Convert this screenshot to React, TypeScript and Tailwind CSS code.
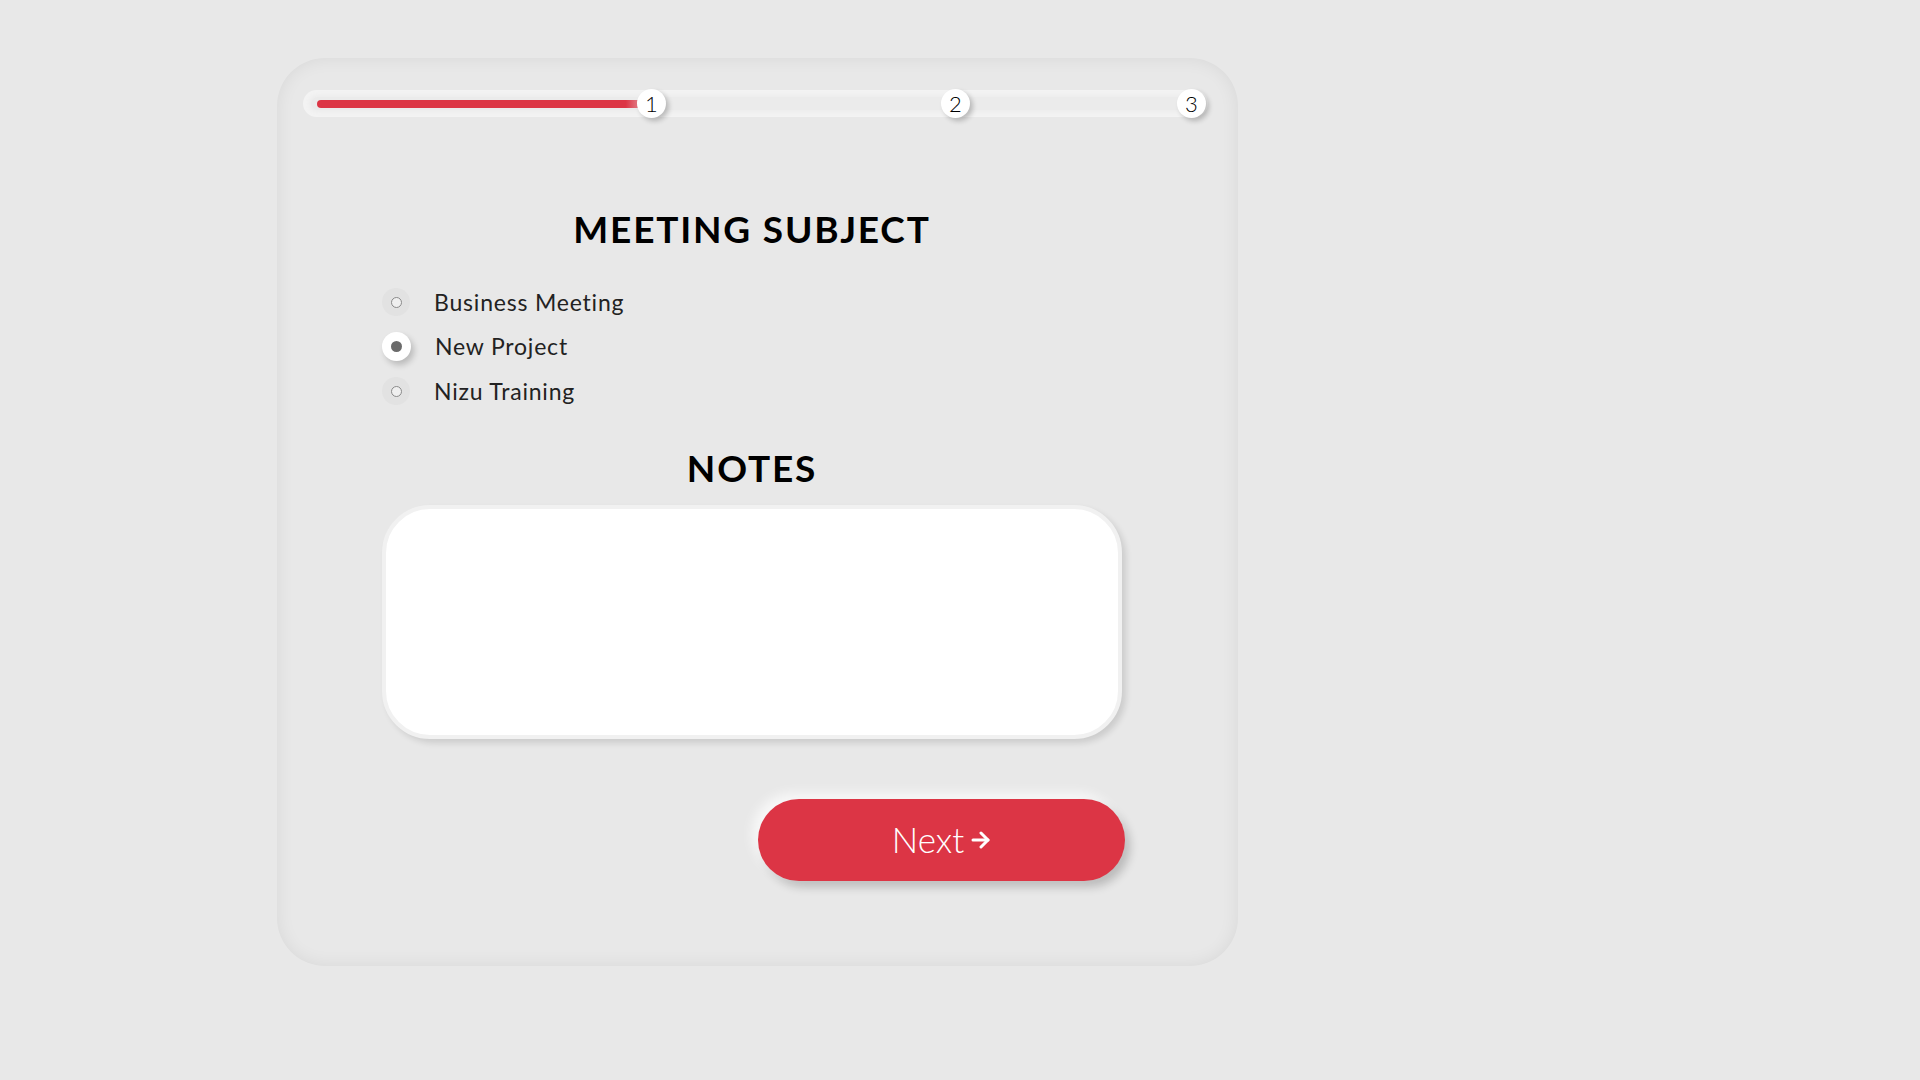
// Meeting wizard - step 1
import { useState } from 'react'

const SUBJECTS = ['Business Meeting', 'New Project', 'Nizu Training']

// step knobs, left offset inside the track (px)
const STEPS = [
  { n: 1, left: 'left-[334px]' },
  { n: 2, left: 'left-[638px]' },
  { n: 3, left: 'left-[874px]' },
]

function ProgressTrack() {
  return (
    <div className="relative h-[27px] w-[905px] rounded-full bg-[#f3f3f3]">
      {/* groove */}
      <div className="absolute left-[8px] right-[8px] top-[7px] h-[13px] rounded-full bg-[#ebebeb] shadow-[0_0_4px_2px_#ececec]" />
      {/* filled part */}
      <div className="absolute left-[14px] top-[10px] h-[8px] w-[332px] rounded-full bg-[linear-gradient(to_right,#dc3545_93%,rgba(220,53,69,0.3))]" />
      {STEPS.map((s) => (
        <div
          key={s.n}
          className={`absolute top-[-1px] ${s.left} flex h-[29px] w-[29px] items-center justify-center rounded-full bg-white text-[22px] font-light leading-none text-black shadow-[3px_3px_5px_rgba(0,0,0,0.22)]`}
        >
          {s.n}
        </div>
      ))}
    </div>
  )
}

function Radio({ label, checked, onClick }: { label: string; checked: boolean; onClick: () => void }) {
  return (
    <button onClick={onClick} className="flex h-[44.5px] items-center gap-[24px] text-left">
      {checked ? (
        <span className="flex h-[29px] w-[29px] items-center justify-center rounded-full bg-white shadow-[3px_4px_6px_rgba(0,0,0,0.2)]">
          <span className="h-[11px] w-[11px] rounded-full bg-[#6b6b6b]" />
        </span>
      ) : (
        <span className="flex h-[28px] w-[28px] items-center justify-center rounded-full bg-[#e2e2e2]">
          <span className="h-[11px] w-[11px] rounded-full border border-[#8a8a8a] bg-[#efefef]" />
        </span>
      )}
      <span className="text-[23px] leading-none tracking-[0.8px] text-[#222]">{label}</span>
    </button>
  )
}

export default function App() {
  const [subject, setSubject] = useState('New Project')

  return (
    <div className="min-h-screen bg-[#e8e8e8] pl-[277px] pt-[58px] font-['Lato',sans-serif]">
      <div className="h-[908px] w-[961px] rounded-[48px] bg-[#e8e8e8] px-[26px] pt-[32px] shadow-[inset_0_0_18px_rgba(0,0,0,0.07)]">
        <ProgressTrack />

        <div className="ml-[79px] w-[740px]">
          <h2 className="mt-[93px] text-center text-[37px] font-bold leading-none tracking-[1.8px] text-black">MEETING SUBJECT</h2>

          <div className="mt-[33px] flex flex-col">
            {SUBJECTS.map((s) => (
              <Radio key={s} label={s} checked={subject === s} onClick={() => setSubject(s)} />
            ))}
          </div>

          <h2 className="mt-[35px] text-center text-[37px] font-bold leading-none tracking-[1.8px] text-black">NOTES</h2>

          <textarea className="mt-[19px] block h-[234px] w-[740px] resize-none rounded-[48px] border-4 border-[#f1f1f1] bg-white p-6 text-[20px] outline-none shadow-[4px_4px_6px_rgba(0,0,0,0.12)]" />

          <div className="mt-[60px] pl-[376px]">
            <button className="flex h-[82px] w-[367px] items-center justify-center gap-[7px] rounded-full bg-[#dc3545] text-[35px] font-light text-white shadow-[-6px_-6px_12px_rgba(255,255,255,0.7),5px_6px_10px_rgba(0,0,0,0.2)]">
              <span className="leading-none">Next</span>
              <svg width="20" height="18" viewBox="0 0 20 18" fill="none" stroke="white" strokeWidth="3" strokeLinecap="round" strokeLinejoin="round">
                <path d="M2 9h15" />
                <path d="M10 2l7 7-7 7" />
              </svg>
            </button>
          </div>
        </div>
      </div>
    </div>
  )
}
